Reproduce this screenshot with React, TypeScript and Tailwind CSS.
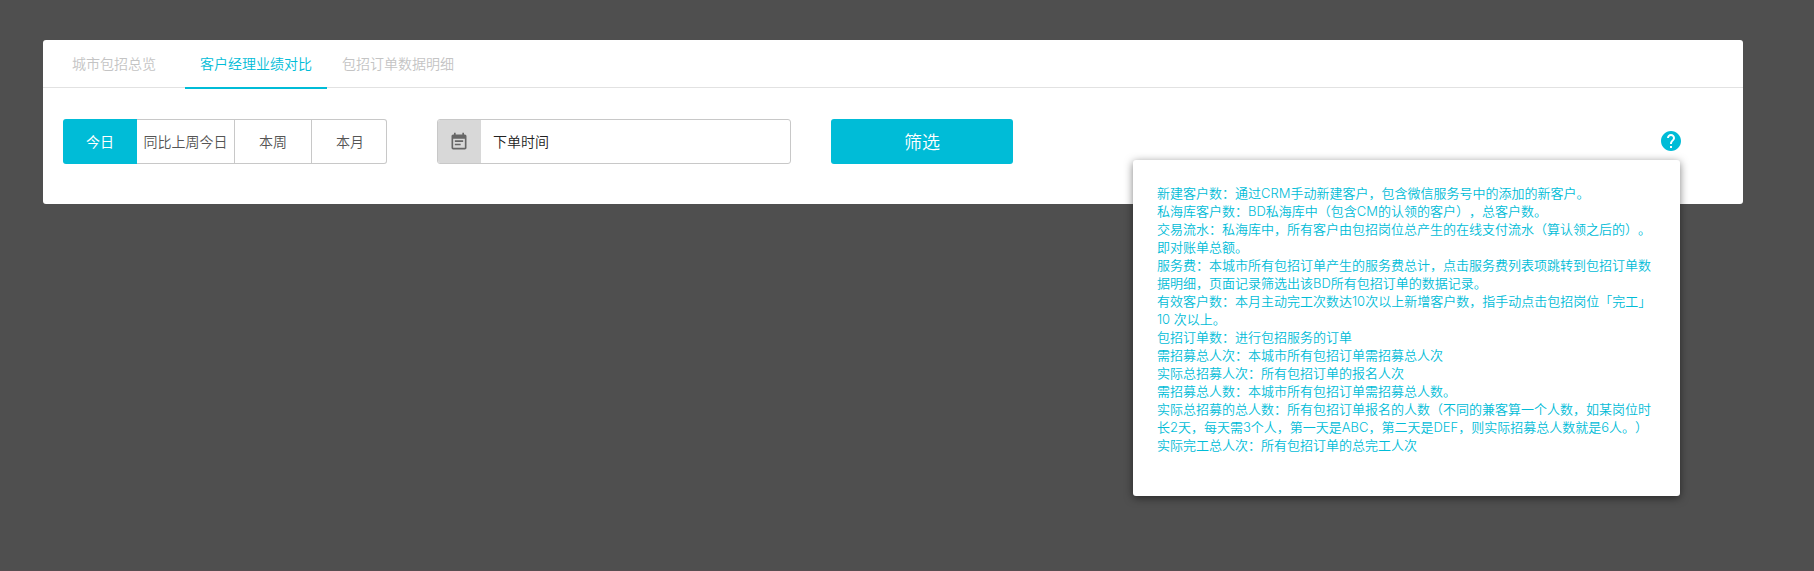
import { MdEventNote, MdHelp } from "react-icons/md";

const tabs = [
  { label: "城市包招总览", className: "w-[142px] pb-px text-[#c4c4c4]" },
  { label: "客户经理业绩对比", className: "w-[142px] border-b-2 border-[#00bcd7] pt-px text-[#00bcd7]" },
  { label: "包招订单数据明细", className: "w-[142px] pb-px text-[#c4c4c4]" },
];

const ranges = [
  { label: "同比上周今日", className: "w-[98px] border-r border-[#c8c8c8]" },
  { label: "本周", className: "w-[77px] border-r border-[#c8c8c8]" },
  { label: "本月", className: "flex-1 pl-0.5" },
];

const notes = [
  "新建客户数：通过CRM手动新建客户，包含微信服务号中的添加的新客户。",
  "私海库客户数：BD私海库中（包含CM的认领的客户），总客户数。",
  "交易流水：私海库中，所有客户由包招岗位总产生的在线支付流水（算认领之后的）。",
  "即对账单总额。",
  "服务费：本城市所有包招订单产生的服务费总计，点击服务费列表项跳转到包招订单数",
  "据明细，页面记录筛选出该BD所有包招订单的数据记录。",
  "有效客户数：本月主动完工次数达10次以上新增客户数，指手动点击包招岗位「完工」",
  "10 次以上。",
  "包招订单数：进行包招服务的订单",
  "需招募总人次：本城市所有包招订单需招募总人次",
  "实际总招募人次：所有包招订单的报名人次",
  "需招募总人数：本城市所有包招订单需招募总人数。",
  "实际总招募的总人数：所有包招订单报名的人数（不同的兼客算一个人数，如某岗位时",
  "长2天，每天需3个人，第一天是ABC，第二天是DEF，则实际招募总人数就是6人。）",
  "实际完工总人次：所有包招订单的总完工人次",
];

export default function App() {
  return (
    <div className="h-[571px] w-full overflow-hidden border-b border-[#574d50] bg-[#4f4f4f] px-[43px] pt-10 font-['Inter','Noto_Sans_CJK_SC',sans-serif] font-[350] [text-spacing-trim:space-all]">
      <main className="relative h-[164px] w-[1700px] rounded-[3px] bg-white">
        <nav className="flex h-12 border-b border-[#e2e2e2] text-sm">
          {tabs.map((tab) => (
            <button key={tab.label} className={`h-[49px] shrink-0 whitespace-nowrap ${tab.className}`}>
              {tab.label}
            </button>
          ))}
        </nav>

        <div className="flex items-center pt-[31px] pl-5">
          <div className="flex h-[45px] w-[324px] text-sm text-[#555]">
            <button className="w-[74px] rounded-l-[3px] bg-[#00bcd7] font-normal text-white">今日</button>
            <div className="flex flex-1 rounded-r-[3px] border border-l-0 border-[#c8c8c8]">
              {ranges.map((range) => (
                <button key={range.label} className={`whitespace-nowrap ${range.className}`}>
                  {range.label}
                </button>
              ))}
            </div>
          </div>

          <div className="ml-[50px] flex h-[45px] w-[354px] overflow-hidden rounded-[3px] border border-[#c8c8c8]">
            <span className="flex w-[43px] items-center justify-center bg-[#d8d8d8] pr-px text-[#666]">
              <MdEventNote size={20} />
            </span>
            <span className="flex flex-1 items-center pl-3 text-sm text-[#222]">下单时间</span>
          </div>

          <button className="ml-10 h-[45px] w-[182px] rounded-[3px] bg-[#00bcd7] pt-0.5 text-lg text-white">
            筛选
          </button>

          <MdHelp size={24} className="mb-px ml-[646px] text-[#00bcd7]" />
        </div>

        <aside className="absolute top-[120px] left-[1090px] h-[336px] w-[547px] rounded-[3px] bg-white pt-6 pl-6 text-[13px] leading-[18px] text-[#00bcd7] shadow-[0_2px_8px_rgba(0,0,0,0.5)]">
          {notes.map((note) => (
            <p key={note} className="whitespace-nowrap">
              {note}
            </p>
          ))}
        </aside>
      </main>
    </div>
  );
}
